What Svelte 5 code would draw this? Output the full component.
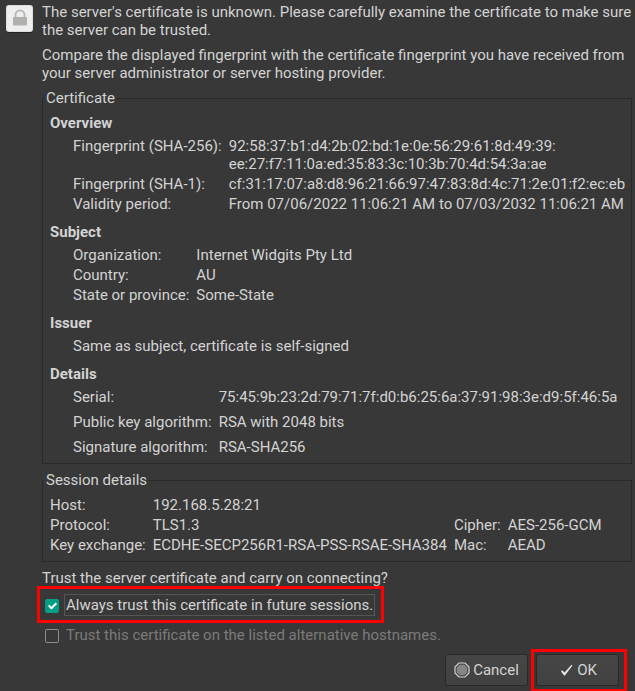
<script lang="ts">
  type Field = { label: string; value: string[] };
  type Section = { title: string; loose?: boolean; fields?: Field[]; note?: string };

  const sections: Section[] = [
    {
      title: 'Overview',
      fields: [
        {
          label: 'Fingerprint (SHA-256):',
          value: [
            '92:58:37:b1:d4:2b:02:bd:1e:0e:56:29:61:8d:49:39:',
            'ee:27:f7:11:0a:ed:35:83:3c:10:3b:70:4d:54:3a:ae'
          ]
        },
        { label: 'Fingerprint (SHA-1):', value: ['cf:31:17:07:a8:d8:96:21:66:97:47:83:8d:4c:71:2e:01:f2:ec:eb'] },
        { label: 'Validity period:', value: ['From 07/06/2022 11:06:21 AM to 07/03/2032 11:06:21 AM'] }
      ]
    },
    {
      title: 'Subject',
      fields: [
        { label: 'Organization:', value: ['Internet Widgits Pty Ltd'] },
        { label: 'Country:', value: ['AU'] },
        { label: 'State or province:', value: ['Some-State'] }
      ]
    },
    { title: 'Issuer', note: 'Same as subject, certificate is self-signed' },
    {
      title: 'Details',
      loose: true,
      fields: [
        { label: 'Serial:', value: ['75:45:9b:23:2d:79:71:7f:d0:b6:25:6a:37:91:98:3e:d9:5f:46:5a'] },
        { label: 'Public key algorithm:', value: ['RSA with 2048 bits'] },
        { label: 'Signature algorithm:', value: ['RSA-SHA256'] }
      ]
    }
  ];

  let alwaysTrust = $state(true);
  let trustHostnames = $state(false);
</script>

<main class="dialog">
  <svg class="lock" viewBox="0 0 29 30" aria-hidden="true">
    <rect x="1" y="2" width="27" height="27" rx="3" fill="#232323" />
    <rect x="1" y="1" width="27" height="27" rx="3" fill="#dcdcdc" />
    <rect x="2" y="2" width="25" height="25" rx="2" fill="#eeeeee" />
    <path d="M10.5 13.5V10.8a4.5 4.5 0 0 1 9 0V13.5" fill="none" stroke="#b4b4b0" stroke-width="1.8" />
    <rect x="8" y="13" width="14" height="8.5" rx="1" fill="#b0b0ac" />
  </svg>

  <div class="content">
    <p>
      The server's certificate is unknown. Please carefully examine the certificate to make sure
      the server can be trusted.
    </p>
    <p>
      Compare the displayed fingerprint with the certificate fingerprint you have received from
      your server administrator or server hosting provider.
    </p>

    <fieldset class="certificate">
      <legend>Certificate</legend>
      {#each sections as section}
        <section>
          <h2>{section.title}</h2>
          {#if section.fields}
            <dl class="fields" class:loose={section.loose}>
              {#each section.fields as field}
                <dt>{field.label}</dt>
                <dd>
                  {#each field.value as line}
                    <div>{line}</div>
                  {/each}
                </dd>
              {/each}
            </dl>
          {:else}
            <p class="note">{section.note}</p>
          {/if}
        </section>
      {/each}
    </fieldset>

    <fieldset class="session">
      <legend>Session details</legend>
      <dl class="fields">
        <dt>Host:</dt>
        <dd class="wide">192.168.5.28:21</dd>
        <dt>Protocol:</dt>
        <dd>TLS1.3</dd>
        <dt>Cipher:</dt>
        <dd>AES-256-GCM</dd>
        <dt>Key exchange:</dt>
        <dd>ECDHE-SECP256R1-RSA-PSS-RSAE-SHA384</dd>
        <dt>Mac:</dt>
        <dd>AEAD</dd>
      </dl>
    </fieldset>

    <p>Trust the server certificate and carry on connecting?</p>

    <div class="options">
      <div class="option marked">
        <input id="always" type="checkbox" bind:checked={alwaysTrust} />
        <label for="always" class="focused">Always trust this certificate in future sessions.</label>
      </div>
      <div class="option">
        <input id="hostnames" type="checkbox" disabled bind:checked={trustHostnames} />
        <label for="hostnames">Trust this certificate on the listed alternative hostnames.</label>
      </div>
    </div>

    <div class="actions">
      <button type="button">
        <svg width="16" height="16" viewBox="0 0 16 16" aria-hidden="true">
          <path d="M5 1h6l4 4v6l-4 4H5l-4-4V5z" fill="none" stroke="#d3d3d3" stroke-width="1.2" />
          <path d="M5.7 2.7h4.6l3 3v4.6l-3 3H5.7l-3-3V5.7z" fill="#858585" />
        </svg>
        Cancel
      </button>
      <div class="marked">
        <button type="button">
          <svg width="16" height="16" viewBox="0 0 16 16" aria-hidden="true">
            <path d="M3 9.4l1.2-1.2 2.3 2.2L13.6 2.8l.9.8-7.6 9.8h-.8z" fill="#e6e6e6" />
          </svg>
          OK
        </button>
      </div>
    </div>
  </div>
</main>

<style>
  :global(body) {
    margin: 0;
    background: #383838;
  }

  .dialog {
    display: flex;
    gap: 8px;
    padding: 3px 3px 5px 5px;
    color: #d3d3d3;
    font: 15px/18px Roboto, sans-serif;
  }

  .lock {
    flex: none;
    width: 29px;
    height: 30px;
    margin-top: 1px;
  }

  .content {
    flex: 1;
    min-width: 0;
    display: flex;
    flex-direction: column;
    gap: 7px;
  }

  p,
  h2,
  dl,
  dd {
    margin: 0;
  }

  fieldset {
    min-width: 0;
    margin: 0;
    border: 1px solid #292929;
  }

  legend {
    margin-left: -6px;
    padding: 0 2px;
  }

  .certificate {
    display: flex;
    flex-direction: column;
    gap: 10px;
    padding: 7px;
  }

  .session {
    padding: 7px;
  }

  h2 {
    margin-bottom: 5px;
    font-size: 15px;
    font-weight: 700;
  }

  .fields {
    display: grid;
    grid-template-columns: max-content 1fr;
    gap: 2px 7px;
  }

  .loose {
    row-gap: 7px;
  }

  .certificate .fields,
  .note {
    padding-left: 23px;
  }

  .session .fields {
    grid-template-columns: max-content max-content max-content 1fr;
  }

  .wide {
    grid-column: span 3;
  }

  .options {
    display: flex;
    flex-direction: column;
    align-items: flex-start;
    gap: 8px;
    padding-left: 3px;
  }

  .option {
    display: flex;
    align-items: center;
    gap: 5px;
  }

  .option label {
    padding: 1px;
    border: 1px solid transparent;
  }

  .option .focused {
    border-color: #555555;
  }

  input {
    appearance: none;
    flex: none;
    width: 14px;
    height: 14px;
    margin: 2px 0 0;
    border: 1px solid #8c8c8c;
    border-radius: 2px;
  }

  input:checked {
    position: relative;
    border-color: #009f85;
    background: #009f85;
  }

  input:checked::after {
    content: '';
    position: absolute;
    left: 4px;
    top: 1px;
    width: 3px;
    height: 6px;
    border: solid #ffffff;
    border-width: 0 2px 2px 0;
    transform: rotate(45deg);
  }

  input:disabled,
  input:disabled + label {
    color: #7b7b7b;
  }

  .marked {
    position: relative;
  }

  .marked::before {
    content: '';
    position: absolute;
    inset: -5px -8px -6px -5px;
    border: 3px solid #ff0000;
    pointer-events: none;
  }

  .option.marked::before {
    inset: -8px -9px -7px -8px;
  }

  .actions {
    display: flex;
    justify-content: flex-end;
    gap: 8px;
    margin-top: 1px;
    padding-right: 13px;
  }

  button {
    display: flex;
    align-items: center;
    justify-content: center;
    gap: 3px;
    width: 83px;
    height: 32px;
    padding: 0;
    border: 1px solid #292929;
    border-radius: 2px;
    background: linear-gradient(#464646, #414141);
    color: inherit;
    font: inherit;
  }
</style>
